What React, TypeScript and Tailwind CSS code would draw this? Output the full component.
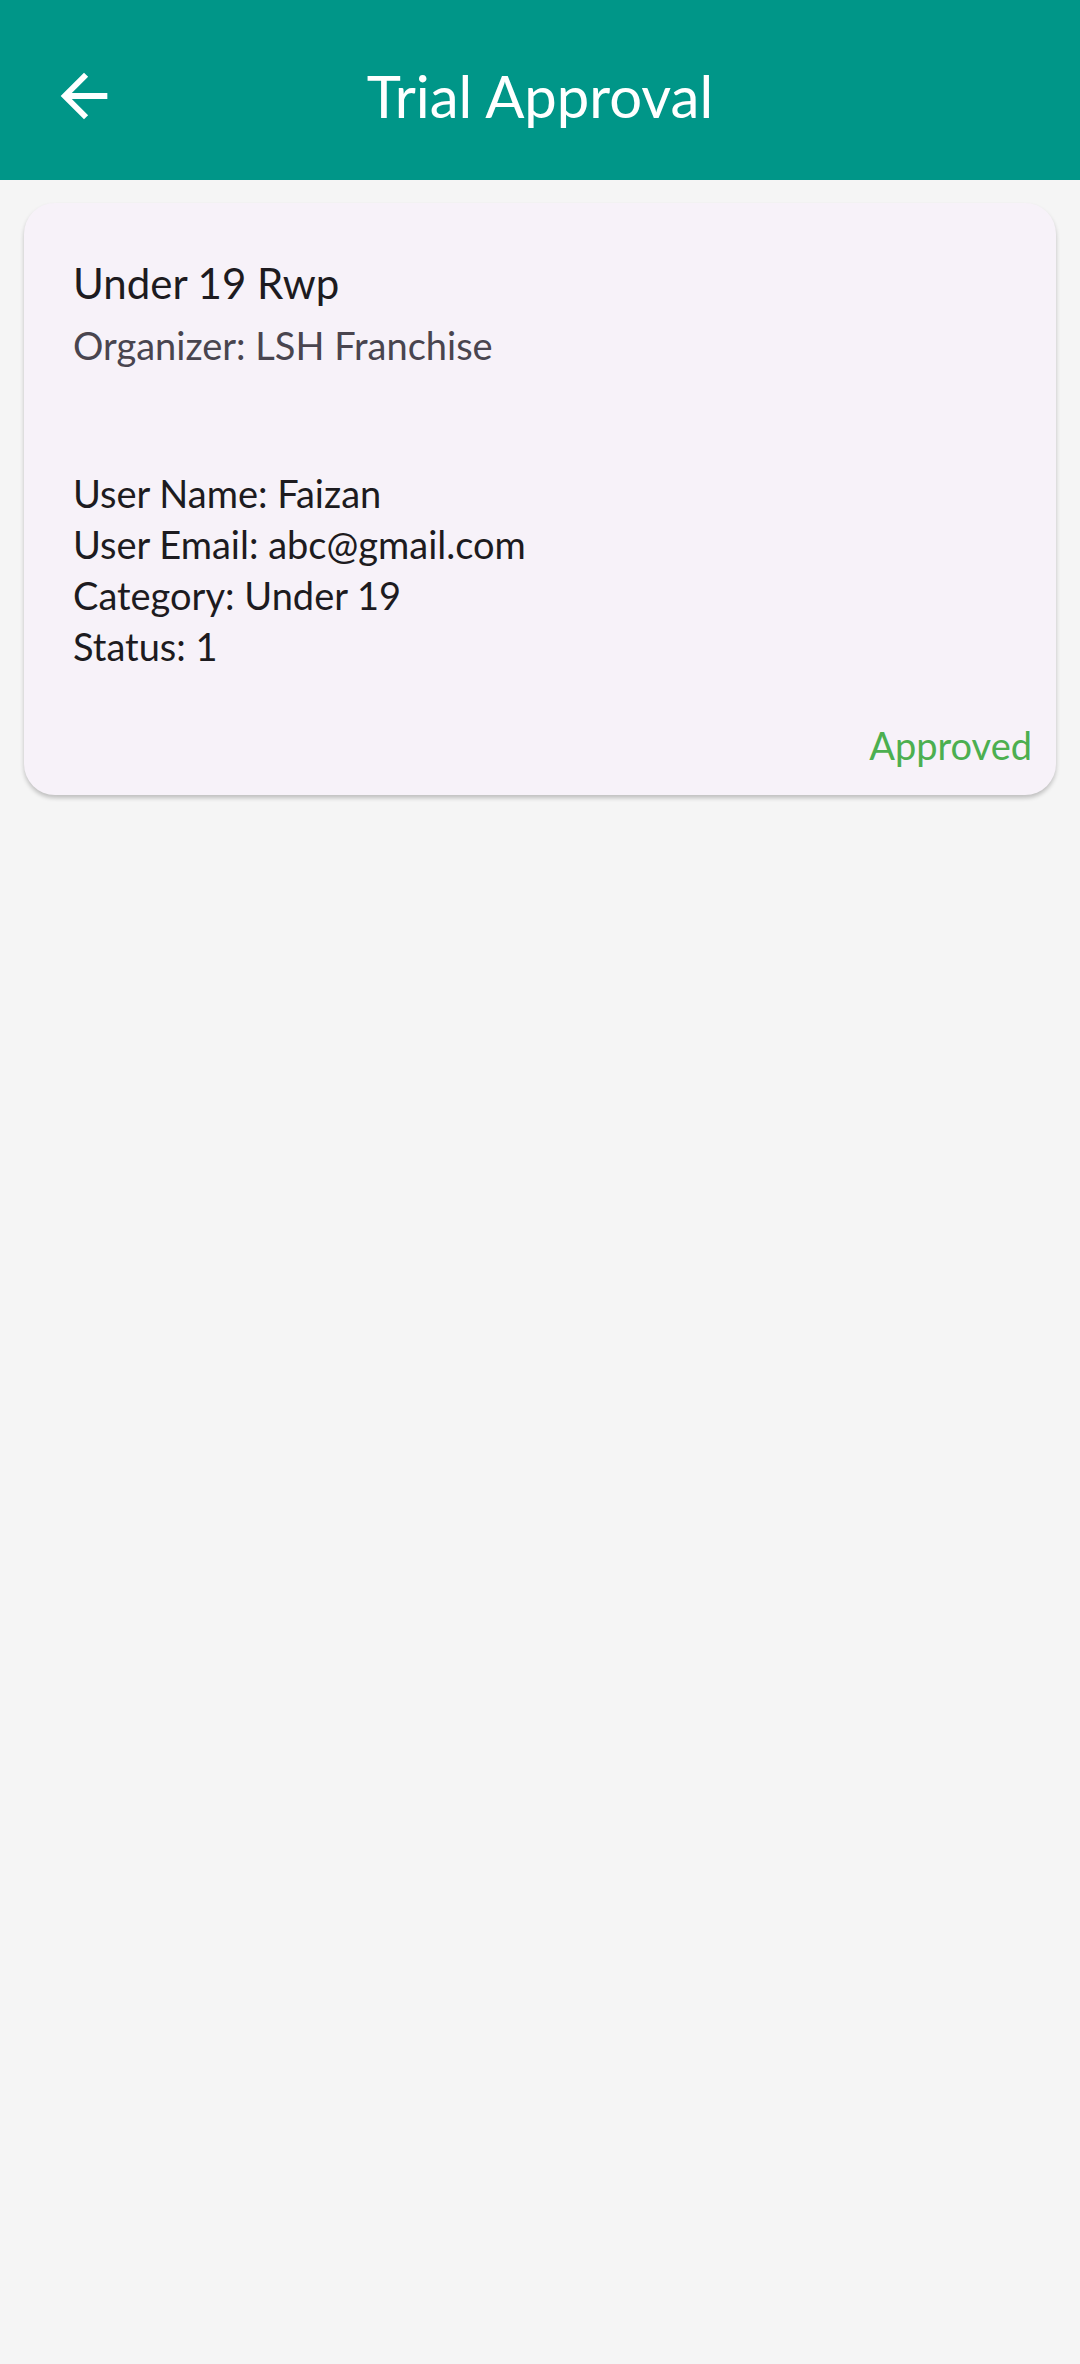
const details = [
  "User Name: Faizan",
  "User Email: abc@gmail.com",
  "Category: Under 19",
  "Status: 1",
];

const BackIcon = () => (
  <svg width="70" height="70" viewBox="0 0 24 24" fill="white">
    <path d="M20 11H7.83l5.59-5.59L12 4l-8 8 8 8 1.41-1.41L7.83 13H20v-2z" />
  </svg>
);

const TrialCard: React.FC<{
  title: string;
  organizer: string;
  lines: string[];
  status: string;
}> = (props) => {
  return (
    <div className="rounded-[31px] bg-[#f7f2f9] shadow-[0_3px_4px_rgba(0,0,0,0.22)] pl-[49px] pr-[24px] pt-[52px] pb-[24px]">
      <div className="text-[42px] leading-[56px] text-[#1d1b20]">{props.title}</div>
      <div className="text-[38px] leading-[50px] text-[#49454f] mt-[9px]">
        {props.organizer}
      </div>
      <div className="mt-[98px] flex flex-col">
        {props.lines.map((line) => (
          <div key={line} className="text-[38px] leading-[51px] text-[#1d1b20]">
            {line}
          </div>
        ))}
      </div>
      <div className="flex justify-end mt-[48px]">
        <button className="text-[38px] leading-[51px] text-[#4caf50]" type="button">
          {props.status}
        </button>
      </div>
    </div>
  );
};

export default function App() {
  return (
    <div
      className="w-[1080px] min-h-[2364px] bg-[#f5f5f5]"
      style={{ fontFamily: "Lato, 'Noto Sans', sans-serif" }}
    >
      <div className="relative h-[180px] bg-[#009688] flex items-center justify-center">
        <div className="absolute left-[49px] top-[61px]">
          <BackIcon />
        </div>
        <div className="text-white text-[58px] leading-[70px] pt-[12px]">Trial Approval</div>
      </div>
      <div className="px-[24px] pt-[23px]">
        <TrialCard
          title="Under 19 Rwp"
          organizer="Organizer: LSH Franchise"
          lines={details}
          status="Approved"
        />
      </div>
    </div>
  );
}
